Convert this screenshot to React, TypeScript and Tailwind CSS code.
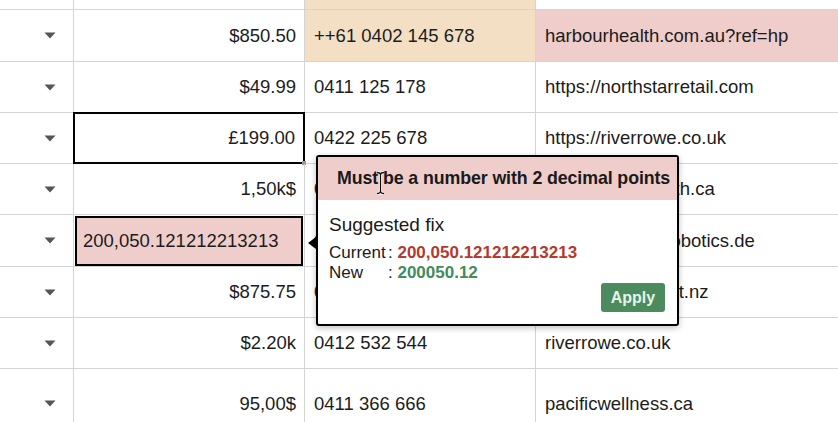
import React from 'react';

type Row = {
  amount: string;
  phone: string;
  site: string;
  h: string;
  phoneTone?: boolean;
  siteTone?: boolean;
  selected?: boolean;
  invalid?: boolean;
};

const ROWS: Row[] = [
  { amount: '', phone: '', site: '', h: 'h-[10px]', phoneTone: true },
  { amount: '$850.50', phone: '++61 0402 145 678', site: 'harbourhealth.com.au?ref=hp', h: 'h-[52px]', phoneTone: true, siteTone: true },
  { amount: '$49.99', phone: '0411 125 178', site: 'https://northstarretail.com', h: 'h-[51px]' },
  { amount: '£199.00', phone: '0422 225 678', site: 'https://riverrowe.co.uk', h: 'h-[51px]', selected: true },
  { amount: '1,50k$', phone: '0433 118 902', site: 'https://grandnorth.ca', h: 'h-[51px]' },
  { amount: '200,050.121212213213', phone: '0455 870 213', site: 'https://www.axrobotics.de', h: 'h-[52px]', invalid: true },
  { amount: '$875.75', phone: '0466 330 781', site: 'https://kiwiparent.nz', h: 'h-[51px]' },
  { amount: '$2.20k', phone: '0412 532 544', site: 'riverrowe.co.uk', h: 'h-[51px]' },
  { amount: '95,00$', phone: '0411 366 666', site: 'pacificwellness.ca', h: 'h-[70px]' },
];

function Caret() {
  return (
    <svg width="12" height="7" viewBox="0 0 12 7">
      <path d="M0.5 0.5 H11.5 L6 6.5 Z" fill="#555" />
    </svg>
  );
}

function TextCursor() {
  const d = 'M1 1.5 Q4.5 1.5 4.5 4 V20 Q4.5 22.5 1 22.5 M8 1.5 Q4.5 1.5 4.5 4 M4.5 20 Q4.5 22.5 8 22.5';
  return (
    <svg className="absolute left-[58px] top-[14px]" width="9" height="24" viewBox="0 0 9 24">
      <path d={d} stroke="#fff" strokeWidth="3" fill="none" />
      <path d={d} stroke="#111" strokeWidth="1.3" fill="none" />
    </svg>
  );
}

function FixPopover() {
  return (
    <div className="absolute left-[316px] top-[155px] w-[363px] h-[171px] border-2 border-black rounded-[3px] bg-white shadow-[0_2px_6px_rgba(0,0,0,0.25)]">
      <div className="absolute left-[-10px] top-[80px] w-0 h-0 border-y-[6px] border-y-transparent border-r-[8px] border-r-black" />
      <div className="h-[43px] bg-[#efcdca] flex items-center pl-[19px] text-[17.8px] font-semibold text-[#1a1a1a] tracking-[-0.1px]">
        Must be a number with 2 decimal points
      </div>
      <div className="px-[11px] pt-[13px]">
        <div className="text-[19px] text-[#1a1a1a] leading-[24px]">Suggested fix</div>
        <div className="mt-[6px] text-[17px] leading-[20px] text-[#1a1a1a]">
          <div className="flex">
            <span className="w-[59px]">Current</span>
            <span>:&nbsp;</span>
            <span className="font-bold text-[#b5392c]">200,050.121212213213</span>
          </div>
          <div className="flex">
            <span className="w-[59px]">New</span>
            <span>:&nbsp;</span>
            <span className="font-bold text-[#3f8c5c]">200050.12</span>
          </div>
        </div>
        <div className="flex justify-end pr-[1px]">
          <button className="w-[64px] h-[29px] rounded-[3px] bg-[#4b8b5d] text-[#e6f3e8] text-[16px] font-semibold">
            Apply
          </button>
        </div>
      </div>
      <TextCursor />
    </div>
  );
}

export default function App() {
  return (
    <div className="relative w-[838px] h-[422px] overflow-hidden bg-white font-['Liberation_Sans',Arial,sans-serif] text-[18.5px] text-[#1c1c1c]">
      {ROWS.map((r, i) => (
        <div key={i} className={`grid grid-cols-[74px_231px_231px_1fr] border-b border-[#d4d4d4] ${r.h}`}>
          <div className="border-r border-[#d4d4d4] flex items-center justify-end pr-[17px]">
            {r.amount && <Caret />}
          </div>
          <div className="border-r border-[#d4d4d4] relative">
            {r.selected && (
              <div className="absolute left-[-1px] right-[-1px] top-[-1px] bottom-[-1px] border-2 border-black flex items-center justify-end pr-[8px]">
                {r.amount}
                <div className="absolute right-[-3px] bottom-[-3px] w-[4px] h-[4px] bg-[#9a9a9a]" />
              </div>
            )}
            {r.invalid && (
              <div className="absolute left-[1px] right-[1px] top-[1px] bottom-0 bg-[#efcdca] border-2 border-black flex items-center pl-[6px]">
                {r.amount}
              </div>
            )}
            {!r.selected && !r.invalid && (
              <div className="h-full flex items-center justify-end pr-[8px]">{r.amount}</div>
            )}
          </div>
          <div className={`border-r border-[#d4d4d4] flex items-center pl-[9px] ${r.phoneTone ? 'bg-[#f3dfc4]' : ''}`}>
            {r.phone}
          </div>
          <div className={`flex items-center pl-[9px] ${r.siteTone ? 'bg-[#efcdca]' : ''}`}>
            {r.site}
          </div>
        </div>
      ))}
      <FixPopover />
    </div>
  );
}
